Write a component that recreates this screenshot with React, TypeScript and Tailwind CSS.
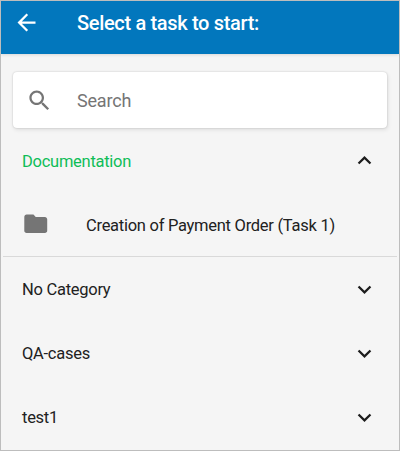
import React from "react";

function Icon({ d, className }: { d: string; className: string }) {
  return (
    <svg viewBox="0 0 24 24" fill="currentColor" className={`shrink-0 ${className}`}>
      <path d={d} />
    </svg>
  );
}

const BACK = "M20 11H7.83l5.59-5.59L12 4l-8 8 8 8 1.41-1.41L7.83 13H20v-2z";
const SEARCH =
  "M15.5 14h-.79l-.28-.27C15.41 12.59 16 11.11 16 9.5 16 5.91 13.09 3 9.5 3S3 5.91 3 9.5 5.91 16 9.5 16c1.61 0 3.09-.59 4.23-1.57l.27.28v.79l5 4.99L20.49 19l-4.99-5zm-6 0C7.01 14 5 11.99 5 9.5S7.01 5 9.5 5 14 7.01 14 9.5 11.99 14 9.5 14z";
const FOLDER =
  "M10 4H4c-1.1 0-1.99.9-1.99 2L2 18c0 1.1.9 2 2 2h16c1.1 0 2-.9 2-2V8c0-1.1-.9-2-2-2h-8l-2-2z";
const UP = "M12 8l-6 6 1.41 1.41L12 10.83l4.59 4.58L18 14z";
const DOWN = "M16.59 8.59L12 13.17 7.41 8.59 6 10l6 6 6-6z";

function Category({ name, open = false }: { name: string; open?: boolean }) {
  return (
    <button className="flex h-16 w-full shrink-0 items-center justify-between px-[21px] text-left tracking-[-0.27px]">
      <span className={open ? "pt-0.5 text-[#0fbd58]" : "pt-0.5 text-[#212121]"}>{name}</span>
      <Icon
        d={open ? UP : DOWN}
        className={open ? "mb-px h-[27px] w-[27px] text-[#1c1c1c]" : "h-[27px] w-[27px] text-[#1c1c1c]"}
      />
    </button>
  );
}

export default function App() {
  return (
    <div className="flex h-[451px] w-[400px] flex-col overflow-hidden border border-[#bdbdbd] bg-[#f5f5f5] font-[Roboto,sans-serif] text-[16.5px] leading-6">
      <header className="flex h-[53px] shrink-0 items-center bg-[#0277bd] pb-[10px] pl-3 text-white shadow-[0_1px_3px_rgba(0,0,0,0.12)]">
        <Icon d={BACK} className="h-[27px] w-[27px]" />
        <h1 className="ml-[37px] pt-px text-[20px] font-medium tracking-[-0.33px] whitespace-nowrap">
          Select a task to start:
        </h1>
      </header>
      <label className="mx-[12px] mt-[18px] flex h-[56px] shrink-0 items-center rounded-[4px] bg-white pl-[13px] shadow-[0_0_2px_rgba(0,0,0,0.2),1px_2px_4px_rgba(0,0,0,0.09)]">
        <Icon d={SEARCH} className="h-[27px] w-[27px] text-[#757575]" />
        <input
          type="text"
          placeholder="Search"
          className="ml-[24px] w-60 bg-transparent pt-0.5 text-[18px] tracking-[-0.2px] text-[#212121] outline-none placeholder:text-[#757575]"
        />
      </label>
      <div className="h-px shrink-0" />
      <Category name="Documentation" open />
      <div className="mx-[2px] flex h-16 shrink-0 items-center border-b border-[#d9d9d9] pl-[19px] text-[#212121]">
        <Icon d={FOLDER} className="mb-px h-[27.5px] w-[27.5px] text-[#757575]" />
        <span className="ml-[36.5px] pt-0.5 tracking-[-0.27px] whitespace-nowrap">Creation of Payment Order (Task 1)</span>
      </div>
      <Category name="No Category" />
      <Category name="QA-cases" />
      <Category name="test1" />
    </div>
  );
}
